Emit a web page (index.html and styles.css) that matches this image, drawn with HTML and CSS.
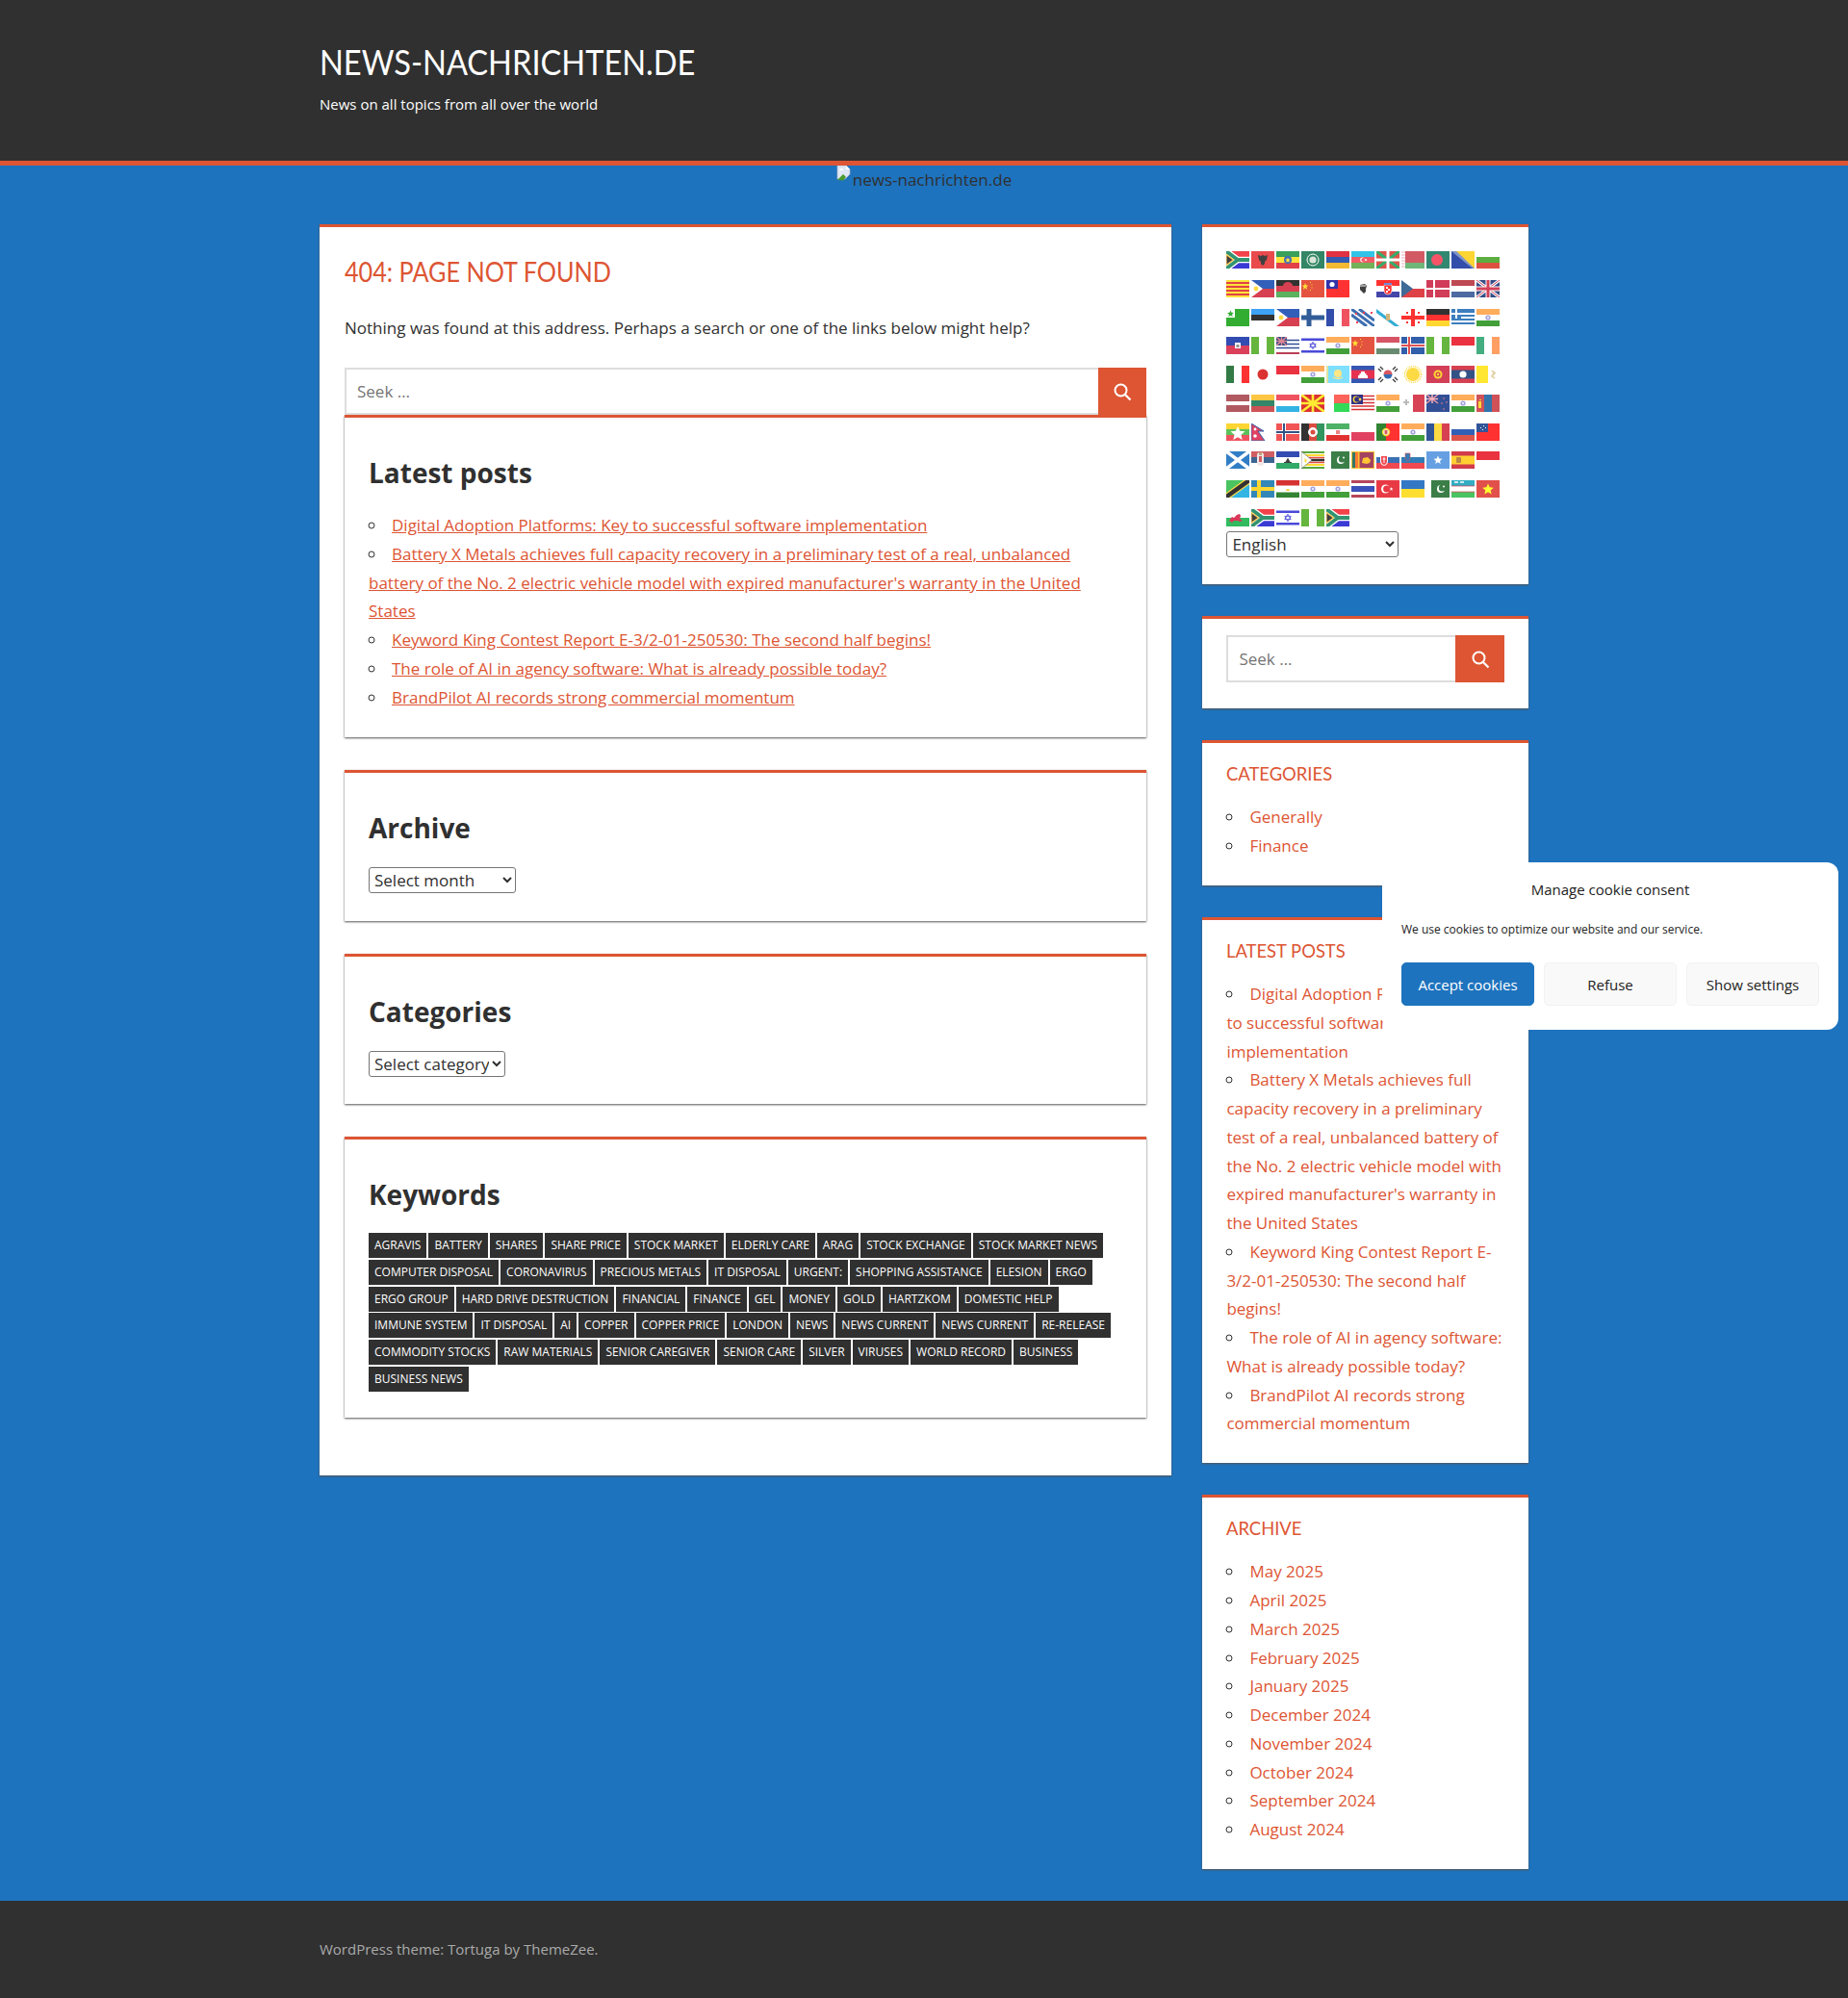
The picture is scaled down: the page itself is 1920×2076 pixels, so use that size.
FILE: index.html
```html
<!DOCTYPE html>
<html lang="en">
<head>
<meta charset="utf-8">
<title>404: Page not found – news-nachrichten.de</title>
<link rel="stylesheet" href="styles.css">
</head>
<body>
<svg class="defs" width="0" height="0" aria-hidden="true">
<symbol id="in" viewBox="0 0 24 18"><rect width="24" height="6" fill="#ff9933"/><rect y="6" width="24" height="6" fill="#fff"/><rect y="12" width="24" height="6" fill="#138808"/><circle cx="12" cy="9" r="2.600" fill="#8a8ad8"/><circle cx="12" cy="9" r="1" fill="#fff"/></symbol>
<symbol id="za" viewBox="0 0 24 18"><rect width="24" height="9" fill="#f0141e"/><rect y="9" width="24" height="9" fill="#0a0acb"/><path d="M0 0l12 9L0 18M12 9h12" stroke="#fff" stroke-width="6.500" fill="none"/><path d="M0 0l12 9L0 18M12 9h12" stroke="#007a4d" stroke-width="3.800" fill="none"/><path d="M0 3.500L7.500 9 0 14.500z" fill="#111" stroke="#ffb81c" stroke-width="1.200"/></symbol>
<symbol id="ng" viewBox="0 0 24 18"><rect width="8" height="18" fill="#3fa30f"/><rect x="16" width="8" height="18" fill="#3fa30f"/></symbol>
<symbol id="il" viewBox="0 0 24 18"><rect y="1.500" width="24" height="2.500" fill="#1c1cd0"/><rect y="14" width="24" height="2.500" fill="#1c1cd0"/><path d="M12 5.200l3.200 5.400H8.800zM12 12.800l-3.200-5.400h6.400z" fill="none" stroke="#3a3ad8"/></symbol>
<symbol id="ph" viewBox="0 0 24 18"><rect width="24" height="9" fill="#0038a8"/><rect y="9" width="24" height="9" fill="#ce1126"/><path d="M0 0l12 9L0 18z" fill="#fff"/><circle cx="5" cy="9" r="2.400" fill="#fcd116"/></symbol>
<symbol id="pk" viewBox="0 0 24 18"><rect x="5" width="19" height="18" fill="#0b5e1b"/><circle cx="15" cy="9" r="4" fill="#fff"/><circle cx="16.300" cy="8" r="3.500" fill="#0b5e1b"/><circle cx="18" cy="6.500" r="1" fill="#fff"/></symbol>
<symbol id="idn" viewBox="0 0 24 18"><rect width="24" height="9" fill="#e70011"/></symbol>
<symbol id="cn" viewBox="0 0 24 18"><rect width="24" height="18" fill="#de2910"/><path d="M4 3l.9 2.600H7.500L5.400 7.200 6.200 10 4 8.300 1.800 10l.8-2.800L.5 5.600h2.600z" fill="#ffde00"/><path d="M9 2h1v1H9zM10.500 4.500h1v1h-1zM10.500 7.500h1v1h-1zM9 10h1v1H9z" fill="#ffde00"/></symbol>
</svg>

<header class="site-header">
  <div class="wrap">
    <h1 class="site-title">NEWS-NACHRICHTEN.DE</h1>
    <p class="site-desc">News on all topics from all over the world</p>
  </div>
</header>

<div class="banner">
  <svg class="broken" viewBox="0 0 16 16"><path d="M1 0h9l4 4v5l-5 5H1z" fill="#dfe6f5" stroke="#aab4c8" stroke-width=".7"/><path d="M10 0v4h4z" fill="#fff"/><path d="M1 15l6-6 3 3-3 3.500z" fill="#4a9a2c"/><path d="M3 5a2 2 0 014 0z" fill="#fff"/></svg>
  <span>news-nachrichten.de</span>
</div>

<div class="wrap layout">
  <main class="main-card">
    <h2 class="page-title">404: PAGE NOT FOUND</h2>
    <p class="intro">Nothing was found at this address. Perhaps a search or one of the links below might help?</p>
    <form class="search">
      <input class="search-input" type="search" placeholder="Seek …">
      <button class="search-btn" type="button" aria-label="Search"><svg class="search-icon" viewBox="0 0 20 20"><circle cx="8.500" cy="8.500" r="6" fill="none" stroke="#fff" stroke-width="2"/><path d="M13 13l5.500 5.500" stroke="#fff" stroke-width="2.200"/></svg></button>
    </form>

    <section class="widget first-widget">
      <h3 class="widget-title">Latest posts</h3>
      <ul class="links under">
        <li><a href="#">Digital Adoption Platforms: Key to successful software implementation</a></li>
        <li><a href="#">Battery X Metals achieves full capacity recovery in a preliminary test of a real, unbalanced battery of the No. 2 electric vehicle model with expired manufacturer's warranty in the United States</a></li>
        <li><a href="#">Keyword King Contest Report E-3/2-01-250530: The second half begins!</a></li>
        <li><a href="#">The role of AI in agency software: What is already possible today?</a></li>
        <li><a href="#">BrandPilot AI records strong commercial momentum</a></li>
      </ul>
    </section>

    <section class="widget">
      <h3 class="widget-title">Archive</h3>
      <div class="select-line"><select class="select select-month"><option>Select month</option></select></div>
    </section>

    <section class="widget">
      <h3 class="widget-title">Categories</h3>
      <div class="select-line"><select class="select select-cat"><option>Select category</option></select></div>
    </section>

    <section class="widget">
      <h3 class="widget-title">Keywords</h3>
      <div class="tags">
        <a href="#">AGRAVIS</a><a href="#">BATTERY</a><a href="#">SHARES</a><a href="#">SHARE PRICE</a><a href="#">STOCK MARKET</a><a href="#">ELDERLY CARE</a><a href="#">ARAG</a><a href="#">STOCK EXCHANGE</a><a href="#">STOCK MARKET NEWS</a>
        <a href="#">COMPUTER DISPOSAL</a><a href="#">CORONAVIRUS</a><a href="#">PRECIOUS METALS</a><a href="#">IT DISPOSAL</a><a href="#">URGENT:</a><a href="#">SHOPPING ASSISTANCE</a><a href="#">ELESION</a><a href="#">ERGO</a>
        <a href="#">ERGO GROUP</a><a href="#">HARD DRIVE DESTRUCTION</a><a href="#">FINANCIAL</a><a href="#">FINANCE</a><a href="#">GEL</a><a href="#">MONEY</a><a href="#">GOLD</a><a href="#">HARTZKOM</a><a href="#">DOMESTIC HELP</a>
        <a href="#">IMMUNE SYSTEM</a><a href="#">IT DISPOSAL</a><a href="#">AI</a><a href="#">COPPER</a><a href="#">COPPER PRICE</a><a href="#">LONDON</a><a href="#">NEWS</a><a href="#">NEWS CURRENT</a><a href="#">NEWS CURRENT</a><a href="#">RE-RELEASE</a>
        <a href="#">COMMODITY STOCKS</a><a href="#">RAW MATERIALS</a><a href="#">SENIOR CAREGIVER</a><a href="#">SENIOR CARE</a><a href="#">SILVER</a><a href="#">VIRUSES</a><a href="#">WORLD RECORD</a><a href="#">BUSINESS</a>
        <a href="#">BUSINESS NEWS</a>
      </div>
    </section>
  </main>

  <aside class="sidebar">
    <section class="side-card flags-card">
      <div class="flags">
        <svg class="flag"><use href="#za"/></svg>
        <svg class="flag" viewBox="0 0 24 18"><rect width="24" height="18" fill="#e41e20"/><path d="M12 4l2 1 3-1-1 5-2 2 0 2-2 2-2-2 0-2-2-2-1-5 3 1z" fill="#111"/></svg>
        <svg class="flag" viewBox="0 0 24 18"><rect width="24" height="6" fill="#078930"/><rect y="6" width="24" height="6" fill="#fcdd09"/><rect y="12" width="24" height="6" fill="#da121a"/><circle cx="12" cy="9" r="4" fill="#0f47af"/><path d="M12 6.500l.8 1.800 1.900.2-1.400 1.300.4 1.900-1.700-1-1.700 1 .4-1.900-1.400-1.300 1.900-.2z" fill="#fcdd09"/></svg>
        <svg class="flag" viewBox="0 0 24 18"><rect width="24" height="18" fill="#00693f"/><circle cx="12" cy="9" r="6" fill="none" stroke="#fff" stroke-width="1"/><circle cx="12" cy="9" r="3.600" fill="#cfe0d0"/></svg>
        <svg class="flag" viewBox="0 0 24 18"><rect width="24" height="6" fill="#d90012"/><rect y="6" width="24" height="6" fill="#0033a0"/><rect y="12" width="24" height="6" fill="#f2a800"/></svg>
        <svg class="flag" viewBox="0 0 24 18"><rect width="24" height="6" fill="#00b5e2"/><rect y="6" width="24" height="6" fill="#ef3340"/><rect y="12" width="24" height="6" fill="#509e2f"/><circle cx="11.500" cy="9" r="2.400" fill="#fff"/><circle cx="12.300" cy="9" r="2" fill="#ef3340"/><circle cx="15" cy="9" r="1" fill="#fff"/></svg>
        <svg class="flag" viewBox="0 0 24 18"><rect width="24" height="18" fill="#d52b1e"/><path d="M0 0l24 18M24 0L0 18" stroke="#009b48" stroke-width="3"/><path d="M12 0v18M0 9h24" stroke="#fff" stroke-width="3"/></svg>
        <svg class="flag" viewBox="0 0 24 18"><rect width="24" height="12" fill="#c8313e"/><rect y="12" width="24" height="6" fill="#4aa657"/><rect width="4" height="18" fill="#fff"/><path d="M1 0v18M3 0v18" stroke="#e7a0a8" stroke-dasharray="2 1"/></svg>
        <svg class="flag" viewBox="0 0 24 18"><rect width="24" height="18" fill="#006a4e"/><circle cx="11" cy="9" r="6" fill="#f42a41"/></svg>
        <svg class="flag" viewBox="0 0 24 18"><rect width="24" height="18" fill="#002395"/><path d="M5 0h19v18z" fill="#fecb00"/><path d="M0 0h5l19 18h-2z" fill="#fff" opacity=".4"/></svg>
        <svg class="flag" viewBox="0 0 24 18"><rect y="6" width="24" height="6" fill="#339a10"/><rect y="12" width="24" height="6" fill="#d62612"/></svg>

        <svg class="flag" viewBox="0 0 24 18"><rect width="24" height="18" fill="#fcdd09"/><path d="M0 3h24M0 7h24M0 11h24M0 15h24" stroke="#da121a" stroke-width="2"/></svg>
        <svg class="flag"><use href="#ph"/></svg>
        <svg class="flag" viewBox="0 0 24 18"><rect width="24" height="6" fill="#000"/><rect y="6" width="24" height="6" fill="#ce1126"/><rect y="12" width="24" height="6" fill="#339e35"/><path d="M7 6a5 4 0 0110 0z" fill="#ce1126"/></svg>
        <svg class="flag"><use href="#cn"/></svg>
        <svg class="flag" viewBox="0 0 24 18"><rect width="24" height="18" fill="#fe0000"/><rect width="12" height="9" fill="#000095"/><circle cx="6" cy="4.500" r="2.600" fill="#fff"/></svg>
        <svg class="flag" viewBox="0 0 24 18"><path d="M9 5l5-1 2 2-1 3 0 3-2 2-2-2-2-2z" fill="#111"/><path d="M9 6h6" stroke="#fff"/></svg>
        <svg class="flag" viewBox="0 0 24 18"><rect width="24" height="6" fill="#f00"/><rect y="6" width="24" height="6" fill="#fff"/><rect y="12" width="24" height="6" fill="#171796"/><path d="M8 5h8v6a4 4 0 01-8 0z" fill="#f00" stroke="#fff" stroke-width=".6"/><path d="M8 3h8v2H8z" fill="#4a6fd0"/><path d="M10 7h2v2h-2zM12 9h2v2h-2zM10 11h2v2h-2z" fill="#fff"/></svg>
        <svg class="flag" viewBox="0 0 24 18"><rect y="9" width="24" height="9" fill="#d7141a"/><path d="M0 0l12 9L0 18z" fill="#11457e"/></svg>
        <svg class="flag" viewBox="0 0 24 18"><rect width="24" height="18" fill="#c60c30"/><path d="M8 0v18M0 9h24" stroke="#fff" stroke-width="2"/></svg>
        <svg class="flag" viewBox="0 0 24 18"><rect width="24" height="6" fill="#ae1c28"/><rect y="12" width="24" height="6" fill="#21468b"/></svg>
        <svg class="flag" viewBox="0 0 24 18"><rect width="24" height="18" fill="#012169"/><path d="M0 0l24 18M24 0L0 18" stroke="#fff" stroke-width="3"/><path d="M0 0l24 18M24 0L0 18" stroke="#c8102e"/><path d="M12 0v18M0 9h24" stroke="#fff" stroke-width="5"/><path d="M12 0v18M0 9h24" stroke="#c8102e" stroke-width="3"/></svg>

        <svg class="flag" viewBox="0 0 24 18"><rect width="24" height="18" fill="#009900"/><rect width="9" height="9" fill="#fff"/><path d="M4.500 1.500l1 2.300 2.500.2-1.900 1.600.6 2.400-2.200-1.300-2.200 1.300.6-2.400L1 4l2.500-.2z" fill="#009900"/></svg>
        <svg class="flag" viewBox="0 0 24 18"><rect width="24" height="6" fill="#0f8bf5"/><rect y="6" width="24" height="6" fill="#000"/></svg>
        <svg class="flag"><use href="#ph"/></svg>
        <svg class="flag" viewBox="0 0 24 18"><path d="M8 0v18M0 9h24" stroke="#003580" stroke-width="5"/></svg>
        <svg class="flag" viewBox="0 0 24 18"><rect width="8" height="18" fill="#002395"/><rect x="16" width="8" height="18" fill="#ed2939"/></svg>
        <svg class="flag" viewBox="0 0 24 18"><path d="M0 0l24 18M8 0l16 12M0 6l16 12" stroke="#0e4a9e" stroke-width="3"/><path d="M4 4h2v2H4zM12 3h2v2h-2zM20 3h2v2h-2zM5 13h2v2H5z" fill="#e8112d"/></svg>
        <svg class="flag" viewBox="0 0 24 18"><path d="M0 0l24 18-5 0L0 4z" fill="#0099cc"/><rect x="10" y="5" width="4" height="7" fill="#c8a25a"/></svg>
        <svg class="flag" viewBox="0 0 24 18"><path d="M12 0v18M0 9h24" stroke="#f00" stroke-width="4"/><path d="M5 3h2v2H5zM17 3h2v2h-2zM5 13h2v2H5zM17 13h2v2h-2z" fill="#f00"/></svg>
        <svg class="flag" viewBox="0 0 24 18"><rect width="24" height="6" fill="#000"/><rect y="6" width="24" height="6" fill="#f00"/><rect y="12" width="24" height="6" fill="#ffce00"/></svg>
        <svg class="flag" viewBox="0 0 24 18"><rect width="24" height="18" fill="#0d5eaf"/><path d="M0 5h24M0 9h24M0 13h24M0 17h24" stroke="#fff" stroke-width="2"/><rect width="10" height="10" fill="#0d5eaf"/><path d="M5 0v10M0 5h10" stroke="#fff" stroke-width="2"/></svg>
        <svg class="flag"><use href="#in"/></svg>

        <svg class="flag" viewBox="0 0 24 18"><rect width="24" height="9" fill="#00209f"/><rect y="9" width="24" height="9" fill="#d21034"/><rect x="9" y="6" width="6" height="6" fill="#fff"/><rect x="10.500" y="8" width="3" height="3" fill="#777"/></svg>
        <svg class="flag"><use href="#ng"/></svg>
        <svg class="flag" viewBox="0 0 24 18"><rect width="24" height="18" fill="#fff"/><path d="M0 3.500h24M0 7.500h24" stroke="#00247d" stroke-width="1.500"/><path d="M0 11.500h24" stroke="#00247d" stroke-width="1.500"/><path d="M0 17h24" stroke="#a8102e" stroke-width="2"/><rect width="11" height="9" fill="#012169"/><path d="M0 0l11 9M11 0L0 9M5.500 0v9M0 4.500h11" stroke="#d86a7a" stroke-width="1.400"/></svg>
        <svg class="flag"><use href="#il"/></svg>
        <svg class="flag"><use href="#in"/></svg>
        <svg class="flag"><use href="#cn"/></svg>
        <svg class="flag" viewBox="0 0 24 18"><rect width="24" height="6" fill="#cd2a3e"/><rect y="12" width="24" height="6" fill="#436f4d"/></svg>
        <svg class="flag" viewBox="0 0 24 18"><rect width="24" height="18" fill="#003897"/><path d="M8 0v18M0 9h24" stroke="#fff" stroke-width="4"/><path d="M8 0v18M0 9h24" stroke="#d72828" stroke-width="2"/></svg>
        <svg class="flag"><use href="#ng"/></svg>
        <svg class="flag"><use href="#idn"/></svg>
        <svg class="flag" viewBox="0 0 24 18"><rect width="8" height="18" fill="#169b62"/><rect x="16" width="8" height="18" fill="#ff883e"/></svg>

        <svg class="flag" viewBox="0 0 24 18"><rect width="8" height="18" fill="#005b18"/><rect x="16" width="8" height="18" fill="#ff0000"/></svg>
        <svg class="flag" viewBox="0 0 24 18"><circle cx="12" cy="9" r="5.500" fill="#d30000"/></svg>
        <svg class="flag"><use href="#idn"/></svg>
        <svg class="flag"><use href="#in"/></svg>
        <svg class="flag" viewBox="0 0 24 18"><rect width="24" height="18" fill="#5fd8ff"/><circle cx="12" cy="8" r="4" fill="#ffe066"/><path d="M7 12q5 3 10 0" stroke="#ffe066" stroke-width="1.400" fill="none"/><path d="M1 0v18" stroke="#ffe066" stroke-width="1.500"/></svg>
        <svg class="flag" viewBox="0 0 24 18"><rect width="24" height="18" fill="#032ea1"/><rect y="4.500" width="24" height="9" fill="#e00025"/><path d="M7 13V10h1.500V8H10V6h4v2h1.500v2H17v3z" fill="#fff"/></svg>
        <svg class="flag" viewBox="0 0 24 18"><path d="M7.500 9a4.500 4.500 0 019 0z" fill="#cd2e3a"/><path d="M7.500 9a4.500 4.500 0 009 0z" fill="#0047a0"/><path d="M2 3l3 3M4 1l3 3M17 4l3-3M19 6l3-3M2 15l3-3M4 17l3-3M17 14l3 3M19 12l3 3" stroke="#111" stroke-width="1.400"/></svg>
        <svg class="flag" viewBox="0 0 24 18"><circle cx="12" cy="9" r="7" fill="#fcd116"/><circle cx="12" cy="9" r="8.500" fill="none" stroke="#fcd116" stroke-width="1.500" stroke-dasharray="1 1"/></svg>
        <svg class="flag" viewBox="0 0 24 18"><rect width="24" height="18" fill="#c8102e"/><circle cx="12" cy="9" r="4.500" fill="#ffcc00"/><circle cx="12" cy="9" r="2.500" fill="#c8102e"/><circle cx="12" cy="9" r="1.200" fill="#ffcc00"/></svg>
        <svg class="flag" viewBox="0 0 24 18"><rect width="24" height="18" fill="#ce1126"/><rect y="4.500" width="24" height="9" fill="#002868"/><circle cx="12" cy="9" r="3.600" fill="#fff"/></svg>
        <svg class="flag" viewBox="0 0 24 18"><rect width="12" height="18" fill="#ffe000"/><path d="M16 5l3 3-3 3 3 2M19 6l-3 5" stroke="#d8c890" stroke-width="1.600" fill="none"/></svg>

        <svg class="flag" viewBox="0 0 24 18"><rect width="24" height="18" fill="#9e3039"/><rect y="7" width="24" height="4" fill="#fff"/></svg>
        <svg class="flag" viewBox="0 0 24 18"><rect width="24" height="6" fill="#fdb913"/><rect y="6" width="24" height="6" fill="#006a44"/><rect y="12" width="24" height="6" fill="#c1272d"/></svg>
        <svg class="flag" viewBox="0 0 24 18"><rect width="24" height="6" fill="#ed2939"/><rect y="12" width="24" height="6" fill="#00a1de"/></svg>
        <svg class="flag" viewBox="0 0 24 18"><rect width="24" height="18" fill="#d20000"/><path d="M12 9L0 0M12 9L24 0M12 9L0 18M12 9l12 9M12 0v18M0 9h24" stroke="#ffe600" stroke-width="2.600"/><circle cx="12" cy="9" r="2.800" fill="#ffe600"/></svg>
        <svg class="flag" viewBox="0 0 24 18"><rect x="8" width="16" height="9" fill="#fc3d32"/><rect x="8" y="9" width="16" height="9" fill="#00d12e"/></svg>
        <svg class="flag" viewBox="0 0 24 18"><rect width="24" height="18" fill="#fff"/><path d="M0 1.500h24M0 5h24M0 8.500h24M0 12h24M0 15.500h24" stroke="#cc0001" stroke-width="1.500"/><rect width="12" height="10" fill="#010066"/><circle cx="5" cy="5" r="3.400" fill="#ffcc00"/><circle cx="6" cy="5" r="2.800" fill="#010066"/><circle cx="9" cy="5" r="1.400" fill="#ffcc00"/></svg>
        <svg class="flag"><use href="#in"/></svg>
        <svg class="flag" viewBox="0 0 24 18"><rect x="12" width="12" height="18" fill="#cf142b"/><path d="M4 5h2v2h2v2H6v2H4V9H2V7h2z" fill="#aaa"/></svg>
        <svg class="flag" viewBox="0 0 24 18"><rect width="24" height="18" fill="#00247d"/><path d="M0 0l12 9M12 0L0 9M6 0v9M0 4.500h12" stroke="#e67a8a" stroke-width="1.500"/><path d="M6 0v9M0 4.500h12" stroke="#fff" stroke-width=".6" opacity=".6"/><circle cx="18" cy="4" r=".8" fill="#e66"/><circle cx="21" cy="8" r=".8" fill="#e66"/><circle cx="16" cy="9" r=".8" fill="#e66"/><circle cx="18" cy="15" r=".8" fill="#e66"/></svg>
        <svg class="flag"><use href="#in"/></svg>
        <svg class="flag" viewBox="0 0 24 18"><rect width="24" height="18" fill="#c4272f"/><rect x="8" width="8" height="18" fill="#015197"/><path d="M3 7h2v7H2V7zM3 5h2v1H3z" fill="#f9cf02"/></svg>

        <svg class="flag" viewBox="0 0 24 18"><rect width="24" height="6" fill="#fecb00"/><rect y="6" width="24" height="6" fill="#34b233"/><rect y="12" width="24" height="6" fill="#ea2839"/><path d="M12 3l2.200 4.800 5.300.5-4 3.500 1.200 5.200-4.700-2.700-4.700 2.700 1.200-5.200-4-3.500 5.300-.5z" fill="#fff"/></svg>
        <svg class="flag" viewBox="0 0 24 18"><path d="M0 0l13 8H7l7 10H0z" fill="#dc143c" stroke="#003893" stroke-width="1"/><circle cx="4" cy="6" r="1.400" fill="#fff"/><circle cx="4" cy="13" r="1.800" fill="#fff"/></svg>
        <svg class="flag" viewBox="0 0 24 18"><rect width="24" height="18" fill="#ef2b2d"/><path d="M8 0v18M0 9h24" stroke="#fff" stroke-width="4"/><path d="M8 0v18M0 9h24" stroke="#002868" stroke-width="2"/></svg>
        <svg class="flag" viewBox="0 0 24 18"><rect width="8" height="18" fill="#000"/><rect x="8" width="8" height="18" fill="#d32011"/><rect x="16" width="8" height="18" fill="#007a36"/><circle cx="12" cy="9" r="4.500" fill="#fff" stroke="#fff"/><circle cx="12" cy="9" r="2.500" fill="#d32011"/></svg>
        <svg class="flag" viewBox="0 0 24 18"><rect width="24" height="6" fill="#239f40"/><rect y="12" width="24" height="6" fill="#da0000"/><path d="M10 7h4v4h-4z" fill="#da0000" opacity=".6"/></svg>
        <svg class="flag" viewBox="0 0 24 18"><rect y="9" width="24" height="9" fill="#dc143c"/></svg>
        <svg class="flag" viewBox="0 0 24 18"><rect width="10" height="18" fill="#060"/><rect x="10" width="14" height="18" fill="#f00"/><circle cx="10" cy="9" r="4.200" fill="#ffcc00"/><circle cx="10" cy="9" r="2.800" fill="#fff"/><path d="M8.500 7h3v3.500l-1.500 1-1.500-1z" fill="#c33"/></svg>
        <svg class="flag"><use href="#in"/></svg>
        <svg class="flag" viewBox="0 0 24 18"><rect width="8" height="18" fill="#002b7f"/><rect x="8" width="8" height="18" fill="#fcd116"/><rect x="16" width="8" height="18" fill="#ce1126"/></svg>
        <svg class="flag" viewBox="0 0 24 18"><rect y="6" width="24" height="6" fill="#0039a6"/><rect y="12" width="24" height="6" fill="#d52b1e"/></svg>
        <svg class="flag" viewBox="0 0 24 18"><rect width="24" height="18" fill="#ff0000"/><rect width="12" height="9" fill="#002b7f"/><path d="M7 2h1v1H7zM4 4h1v1H4zM9 4h1v1H9zM6 6h1v1H6z" fill="#fff"/></svg>

        <svg class="flag" viewBox="0 0 24 18"><rect width="24" height="18" fill="#005eb8"/><path d="M0 0l24 18M24 0L0 18" stroke="#fff" stroke-width="3.600"/></svg>
        <svg class="flag" viewBox="0 0 24 18"><rect width="24" height="6" fill="#c6363c"/><rect y="6" width="24" height="6" fill="#0c4076"/><rect x="6" y="1" width="7" height="14" rx="3" fill="#f0e0e0"/><rect x="8" y="5" width="3" height="6" fill="#c6363c"/><path d="M8 1h3v3H8z" fill="#b08a5a"/></svg>
        <svg class="flag" viewBox="0 0 24 18"><rect width="24" height="6" fill="#00209f"/><rect y="12" width="24" height="6" fill="#009543"/><path d="M12 6.500l2.500 4.500h-5z" fill="#111"/><path d="M8 11.500h8" stroke="#111"/></svg>
        <svg class="flag" viewBox="0 0 24 18"><rect width="24" height="18" fill="#fff"/><path d="M0 1h24M0 17h24" stroke="#319208" stroke-width="2"/><path d="M0 4h24M0 14h24" stroke="#ffd200" stroke-width="2"/><path d="M0 6.500h24M0 11.500h24" stroke="#de2010" stroke-width="1.500"/><path d="M0 9h24" stroke="#000" stroke-width="2.500"/><path d="M0 0l11 9L0 18z" fill="#fff" stroke="#111" stroke-width=".5"/><path d="M3.500 6.500l1 2 2 .2-1.500 1.300.4 2-1.900-1z" fill="#ffd200"/></svg>
        <svg class="flag"><use href="#pk"/></svg>
        <svg class="flag" viewBox="0 0 24 18"><rect width="24" height="18" fill="#ffb700"/><rect x="1" y="1" width="3" height="16" fill="#005641"/><rect x="4" y="1" width="3" height="16" fill="#ff5b00"/><rect x="8.500" y="1" width="14.500" height="16" fill="#8d153a"/><path d="M11 12l1-5 5-1 3 3-1 3-3 1z" fill="#ffb700"/></svg>
        <svg class="flag" viewBox="0 0 24 18"><rect y="6" width="24" height="6" fill="#0b4ea2"/><rect y="12" width="24" height="6" fill="#ee1c25"/><path d="M4 4h8v6q0 4-4 5-4-1-4-5z" fill="#fff"/><path d="M5 5h6v5q0 3-3 4-3-1-3-4z" fill="#ee1c25"/><path d="M8 6v6M6.500 8h3" stroke="#fff"/></svg>
        <svg class="flag" viewBox="0 0 24 18"><rect y="6" width="24" height="6" fill="#005da4"/><rect y="12" width="24" height="6" fill="#ed1c24"/><path d="M4 2h5v4q0 3-2.500 4Q4 9 4 6z" fill="#005da4" stroke="#ed1c24" stroke-width=".6"/></svg>
        <svg class="flag" viewBox="0 0 24 18"><rect width="24" height="18" fill="#4189dd"/><path d="M12 4.500l1.300 3 3.200.300-2.500 2.100.8 3.100-2.800-1.700-2.800 1.700.8-3.100-2.500-2.100 3.200-.3z" fill="#fff"/></svg>
        <svg class="flag" viewBox="0 0 24 18"><rect width="24" height="18" fill="#c60b1e"/><rect y="4.500" width="24" height="9" fill="#ffc400"/><rect x="5" y="6" width="5" height="6" rx="1" fill="#ad6a1a"/></svg>
        <svg class="flag"><use href="#idn"/></svg>

        <svg class="flag" viewBox="0 0 24 18"><path d="M0 0h24L0 18z" fill="#1eb53a"/><path d="M24 0v18H0z" fill="#00a3dd"/><path d="M-1 18L24 0" stroke="#fcd116" stroke-width="7"/><path d="M-1 18L24 0" stroke="#000" stroke-width="4.500"/></svg>
        <svg class="flag" viewBox="0 0 24 18"><rect width="24" height="18" fill="#006aa7"/><path d="M8 0v18M0 9h24" stroke="#fecc00" stroke-width="4"/></svg>
        <svg class="flag" viewBox="0 0 24 18"><rect width="24" height="5.500" fill="#cc0000"/><rect y="12.500" width="24" height="5.500" fill="#006600"/><path d="M10 11a2 2 0 014 0z" fill="#f8c300"/></svg>
        <svg class="flag"><use href="#in"/></svg>
        <svg class="flag"><use href="#in"/></svg>
        <svg class="flag" viewBox="0 0 24 18"><rect width="24" height="18" fill="#fff"/><path d="M0 1.500h24M0 16.500h24" stroke="#a51931" stroke-width="3"/><rect y="6" width="24" height="6" fill="#0a28a8"/></svg>
        <svg class="flag" viewBox="0 0 24 18"><rect width="24" height="18" fill="#e30a17"/><circle cx="9.500" cy="9" r="4.500" fill="#fff"/><circle cx="10.700" cy="9" r="3.600" fill="#e30a17"/><path d="M15.500 7l.5 1.400h1.500l-1.200.9.500 1.500-1.300-.9-1.300.9.500-1.500-1.200-.9H15z" fill="#fff"/></svg>
        <svg class="flag" viewBox="0 0 24 18"><rect width="24" height="9" fill="#0057b7"/><rect y="9" width="24" height="9" fill="#ffd700"/></svg>
        <svg class="flag"><use href="#pk"/></svg>
        <svg class="flag" viewBox="0 0 24 18"><rect width="24" height="6" fill="#0099b5"/><rect y="6" width="24" height="6" fill="#fff"/><rect y="12" width="24" height="6" fill="#1eb53a"/><path d="M0 6h24M0 12h24" stroke="#ce1126" stroke-width=".7"/><path d="M3 2h4M9 2h4" stroke="#fff" stroke-width="1.500"/></svg>
        <svg class="flag" viewBox="0 0 24 18"><rect width="24" height="18" fill="#da251d"/><path d="M12 3.500l1.700 3.800 4.100.4-3.100 2.700.9 4-3.600-2.100-3.600 2.100.9-4-3.100-2.700 4.100-.4z" fill="#ffff00"/></svg>

        <svg class="flag" viewBox="0 0 24 18"><rect y="9" width="24" height="9" fill="#00ab39"/><path d="M3 12l3-4 2 1 3-3 3-1 1 2-1 3 3 2-3 1-2-1-4 0-2 2z" fill="#d30731"/></svg>
        <svg class="flag"><use href="#za"/></svg>
        <svg class="flag"><use href="#il"/></svg>
        <svg class="flag"><use href="#ng"/></svg>
        <svg class="flag"><use href="#za"/></svg>
      </div>
      <select class="select lang"><option>English</option></select>
    </section>

    <section class="side-card search-card">
      <form class="search">
        <input class="search-input" type="search" placeholder="Seek …">
        <button class="search-btn" type="button" aria-label="Search"><svg class="search-icon" viewBox="0 0 20 20"><circle cx="8.500" cy="8.500" r="6" fill="none" stroke="#fff" stroke-width="2"/><path d="M13 13l5.500 5.500" stroke="#fff" stroke-width="2.200"/></svg></button>
      </form>
    </section>

    <section class="side-card">
      <h4 class="side-title">CATEGORIES</h4>
      <ul class="links">
        <li><a href="#">Generally</a></li>
        <li><a href="#">Finance</a></li>
      </ul>
    </section>

    <section class="side-card">
      <h4 class="side-title">LATEST POSTS</h4>
      <ul class="links">
        <li><a href="#">Digital Adoption Platforms: Key to successful software implementation</a></li>
        <li><a href="#">Battery X Metals achieves full capacity recovery in a preliminary test of a real, unbalanced battery of the No. 2 electric vehicle model with expired manufacturer's warranty in the United States</a></li>
        <li><a href="#">Keyword King Contest Report E-3/2-01-250530: The second half begins!</a></li>
        <li><a href="#">The role of AI in agency software: What is already possible today?</a></li>
        <li><a href="#">BrandPilot AI records strong commercial momentum</a></li>
      </ul>
    </section>

    <section class="side-card">
      <h4 class="side-title">ARCHIVE</h4>
      <ul class="links">
        <li><a href="#">May 2025</a></li>
        <li><a href="#">April 2025</a></li>
        <li><a href="#">March 2025</a></li>
        <li><a href="#">February 2025</a></li>
        <li><a href="#">January 2025</a></li>
        <li><a href="#">December 2024</a></li>
        <li><a href="#">November 2024</a></li>
        <li><a href="#">October 2024</a></li>
        <li><a href="#">September 2024</a></li>
        <li><a href="#">August 2024</a></li>
      </ul>
    </section>
  </aside>
</div>

<footer class="site-footer">
  <div class="wrap">WordPress theme: Tortuga by ThemeZee.</div>
</footer>

<div class="cookie">
  <div class="cookie-title">Manage cookie consent</div>
  <p class="cookie-text">We use cookies to optimize our website and our service.</p>
  <div class="cookie-btns">
    <button class="cookie-btn accept" type="button">Accept cookies</button>
    <button class="cookie-btn" type="button">Refuse</button>
    <button class="cookie-btn" type="button">Show settings</button>
  </div>
</div>
</body>
</html>
```
FILE: styles.css
```css
* { box-sizing: border-box; }
html, body { margin: 0; padding: 0; }
body {
  position: relative;
  background: #1e73be;
  color: #303030;
  font-family: "Open Sans", "Liberation Sans", sans-serif;
  font-size: 17px;
  line-height: 1.75;
}
.defs { position: absolute; }
.wrap { width: 1256px; margin: 0 auto; }

.site-header {
  height: 172px;
  background: #303030;
  border-bottom: 5px solid #dd5533;
  padding-top: 40px;
  color: #fff;
}
.site-title {
  margin: 0;
  font-family: "Lato", "Open Sans", sans-serif;
  font-size: 36px;
  font-weight: 400;
  line-height: 48px;
  transform: scaleX(.905);
  transform-origin: left center;
}
.site-desc { margin: 8px 0 0; font-size: 15px; line-height: 24px; }

.banner {
  display: flex;
  justify-content: center;
  align-items: flex-start;
  height: 61px;
  line-height: 29.75px;
}
.broken { width: 16px; height: 16px; flex: none; margin-right: 1px; }

.layout { display: flex; gap: 32.4px; align-items: flex-start; }

.main-card {
  width: 885px;
  background: #fff;
  border-top: 3px solid #dd5533;
  box-shadow: 0 1px 2px #555;
  padding: 0 26px 60px;
}
.page-title {
  margin: 0;
  padding-top: 28px;
  font-family: "Lato", "Open Sans", sans-serif;
  font-size: 28px;
  font-weight: 400;
  line-height: 36px;
  color: #dd5533;
  transform: scaleX(.9);
  transform-origin: left center;
}
.intro { margin: 26px 0 26px; line-height: 30px; }

.search { display: flex; height: 49px; }
.search-input {
  flex: 1;
  min-width: 0;
  height: 49px;
  border: 2px solid #ddd;
  border-right: 0;
  padding: 0 11px;
  font: inherit;
  font-size: 17px;
  color: #303030;
  background: #fff;
  outline: 0;
  appearance: none;
}
.search-input::placeholder { color: #757575; opacity: 1; }
.search-btn {
  flex: none;
  width: 50.5px;
  height: 49px;
  padding: 0;
  border: 0;
  background: #dd5533;
  display: flex;
  align-items: center;
  justify-content: center;
}
.search-icon { width: 20px; height: 20px; }

.widget {
  margin-top: 33.75px;
  background: #fff;
  border-top: 3px solid #dd5533;
  box-shadow: 0 1px 2px #555;
  padding: 25px 25px 27px;
}
.first-widget { margin-top: 0; }
.widget-title {
  margin: 0 0 8px;
  font-size: 28px;
  font-weight: 700;
  line-height: 64px;
  color: #303030;
}
.links { margin: 0; padding: 0; list-style: circle inside; }
.links a { color: #dd5533; text-decoration: none; }
.under a { text-decoration: underline; }

.select-line { height: 29.75px; display: flex; align-items: center; }
.select {
  font-family: "Open Sans", sans-serif;
  font-size: 17px;
  color: #303030;
  background: #fff;
  border: 1px solid #767676;
  border-radius: 3px;
  height: 27px;
  line-height: 1;
  padding: 0 0 0 1px;
}
.select-month { width: 153px; }
.select-cat { width: 142px; }

.tags { display: flex; flex-wrap: wrap; gap: 1.8px 2px; margin-top: 1px; }
.tags a {
  height: 26px;
  padding: 0 6px;
  background: #303030;
  color: #fff;
  font-size: 12px;
  line-height: 26px;
  text-decoration: none;
}

.sidebar { width: 338.6px; flex: none; margin-bottom: 33.25px; }
.side-card {
  background: #fff;
  border-top: 3px solid #dd5533;
  box-shadow: 0 1px 2px #555;
  padding: 17px 25px 26px;
  margin-bottom: 33.25px;
}
.sidebar .side-card:last-child { margin-bottom: 0; }
.flags-card { padding: 25px 25px 28px; }
.search-card { padding: 17px 25px 27px; }
.flags { display: flex; flex-wrap: wrap; gap: 11.75px 2px; }
.flag { width: 24px; height: 18px; display: block; opacity: .8; }
.lang { display: block; width: 179px; margin-top: 5px; }
.side-title {
  margin: 0 0 17px;
  font-family: "Lato", "Open Sans", sans-serif;
  font-size: 20px;
  font-weight: 400;
  line-height: 28px;
  color: #dd5533;
  transform: scaleX(.92);
  transform-origin: left center;
}

.site-footer {
  height: 101px;
  background: #303030;
  color: #aaa;
  font-size: 15px;
  line-height: 101px;
}

.cookie {
  position: absolute;
  top: 896px;
  right: 10px;
  width: 474px;
  height: 174px;
  padding: 20px;
  background: #fff;
  border-radius: 12px;
  color: #222;
}
.cookie-title { text-align: center; font-size: 15px; line-height: 17px; }
.cookie-text { margin: 25px 0 0; font-size: 12px; line-height: 16px; }
.cookie-btns { display: flex; gap: 10px; margin-top: 26px; }
.cookie-btn {
  flex: 1;
  height: 45px;
  padding: 0;
  border: 1px solid #f2f2f2;
  border-radius: 5px;
  background: #f9f9f9;
  color: #222;
  font-family: "Open Sans", sans-serif;
  font-size: 15px;
}
.accept { background: #1e73be; border-color: #1e73be; color: #fff; }
```
